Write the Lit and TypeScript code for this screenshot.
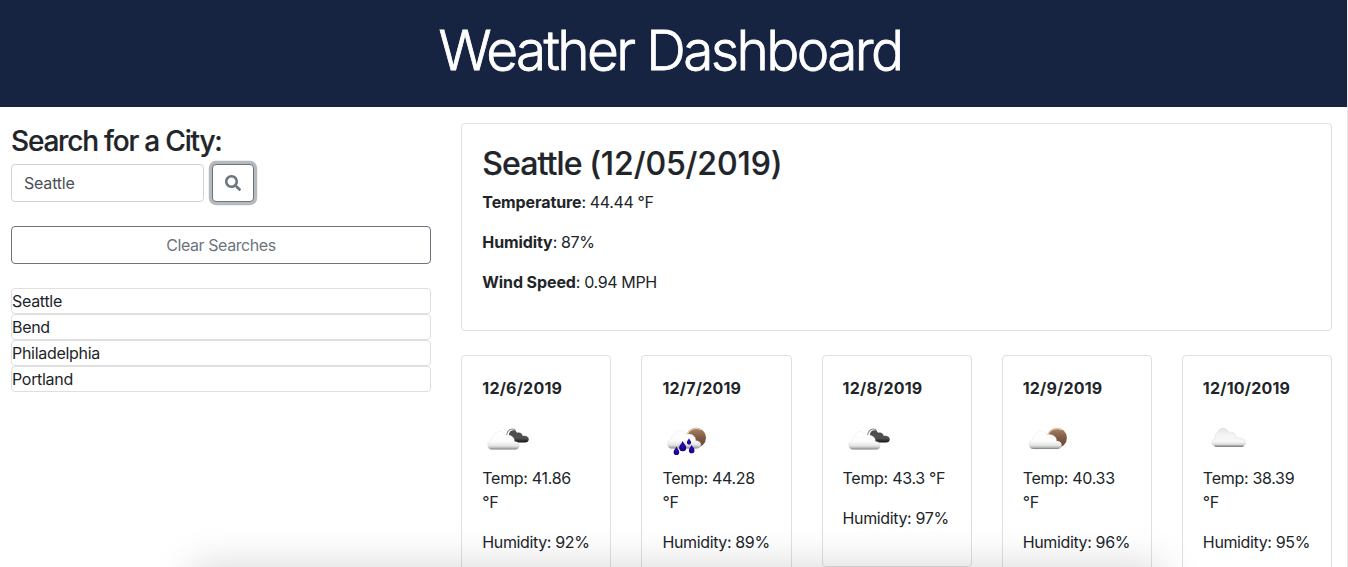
import { LitElement, html, svg, css } from "lit";
import { customElement, property } from "lit/decorators.js";

type Sky = "broken" | "rain" | "few" | "clouds";

interface Day {
  date: string;
  sky: Sky;
  temp: string;
  humidity: string;
}

const DAYS: Day[] = [
  { date: "12/6/2019", sky: "broken", temp: "41.86", humidity: "92%" },
  { date: "12/7/2019", sky: "rain", temp: "44.28", humidity: "89%" },
  { date: "12/8/2019", sky: "broken", temp: "43.3", humidity: "97%" },
  { date: "12/9/2019", sky: "few", temp: "40.33", humidity: "96%" },
  { date: "12/10/2019", sky: "clouds", temp: "38.39", humidity: "95%" },
];

const CITIES = ["Seattle", "Bend", "Philadelphia", "Portland"];

const drop = (x: number, y: number, s: number) => svg`
  <path transform="translate(${x} ${y}) scale(${s})" fill="url(#drop)"
    d="M0 -5C.6 -2.6 3.2 -1.2 3.2 1.4A3.2 3.2 0 0 1 -3.2 1.4C-3.2 -1.2 -.6 -2.6 0 -5Z"/>`;

const moon = svg`
  <circle cx="33.3" cy="21.6" r="10" fill="url(#moon)"/>
  <path d="M24.4 18.6A9.3 9.3 0 0 1 38 13.6" fill="none" stroke="#e9c7ad" stroke-width="1.3"/>`;

const whiteCloud = svg`
  <path fill="url(#white)" stroke="#cfcfcf" stroke-opacity=".45" stroke-width=".5"
    d="M9 33.2C6 33.2 4.6 31 4.6 28.6C4.6 26 6 24.5 8.1 24C7.9 21.4 9 19.4 11.2 18.8C12.2 16.4 14.3 15.2 16.6 15.2C19.2 15.2 21.3 16.6 22.1 18.9C25.4 18.1 28.6 18.8 30 21.1C31.4 22.6 31.4 24 31.2 25C34.3 25.2 36.2 26.8 36.2 29.2C36.2 31.6 34.6 33.2 32 33.2Z"/>`;

@customElement("sky-icon")
export class SkyIcon extends LitElement {
  @property() sky: Sky = "clouds";

  static styles = css`
    :host { display: block; width: 50px; height: 50px; }
    svg { display: block; }
  `;

  private scene() {
    switch (this.sky) {
      case "broken":
        return svg`<g transform="translate(1.1 .3)">
          <path d="M23.4 20.4C23.4 15.6 25.6 12.7 29.4 12.7C31 12.7 32 13.4 32.6 14.6" fill="none" stroke="#8d8d8d" stroke-width="1.1"/>
          <path fill="url(#dark)" d="M29 26.3C26 24 25.2 19 26.2 16.6C27 14.4 29.6 13.6 31.6 14.3C32.8 14.7 33.4 15.6 33.8 16.4C36.6 15.4 39.2 17 39.6 19.6C42.8 19 45.7 20.4 45.7 23C45.7 25 44.2 26.3 42 26.3Z"/>
          ${whiteCloud}</g>`;
      case "rain":
        return svg`<g transform="translate(.7 .2)">${moon}<g transform="translate(-.2 -.8) scale(1.06 1)">${whiteCloud}</g>
          ${drop(13.7, 34.8, 0.88)}${drop(20, 30, 1.1)}${drop(26.3, 25.4, 0.66)}${drop(29, 33, 0.88)}</g>`;
      case "few":
        return svg`<g transform="translate(.6 .3)">${moon}<g transform="translate(.7 -.5) scale(1.03 1)">${whiteCloud}</g></g>`;
      default:
        return svg`
          <path fill="url(#grey)" stroke="#bdbdbd" stroke-opacity=".5" stroke-width=".5"
            d="M13 30.5C10.4 30.5 9 28.8 9 26.6C9 24.8 10.2 23.4 12 22.8C11.6 20.4 12.4 17.4 14.6 16.6C15.4 13.8 17.6 12.3 20 12.3C23.2 12.3 25.4 14.4 26.2 17C28.8 15.6 32 16.8 32.7 19.4C33 20.4 33 21.4 32.8 22.2C35.4 21.2 38 21.8 39.4 23.2C41.4 23.2 42.6 24.6 42.6 26.6C42.6 28.8 41.2 30.5 39 30.5Z"/>
          <path d="M11.8 30.2H40.4" stroke="#777" stroke-width="1.2"/>`;
    }
  }

  render() {
    return html`<svg width="50" height="50" viewBox="0 0 50 50" aria-hidden="true">
      <defs>
        <linearGradient id="white" x1="0" y1="0" x2="0" y2="1">
          <stop offset="0" stop-color="#fff"/><stop offset=".55" stop-color="#fcfcfc"/>
          <stop offset=".8" stop-color="#e4e4e4"/><stop offset=".93" stop-color="#b0b0b0"/><stop offset="1" stop-color="#6c6c6c"/>
        </linearGradient>
        <linearGradient id="grey" x1="0" y1="0" x2="0" y2="1">
          <stop offset="0" stop-color="#e4e4e4"/><stop offset=".35" stop-color="#f4f4f4"/>
          <stop offset=".75" stop-color="#f7f7f7"/><stop offset="1" stop-color="#c0c0c0"/>
        </linearGradient>
        <linearGradient id="dark" x1="0" y1="0" x2="0" y2="1">
          <stop offset="0" stop-color="#4c4c4c"/><stop offset=".65" stop-color="#505050"/><stop offset="1" stop-color="#111"/>
        </linearGradient>
        <linearGradient id="moon" x1="0" y1="0" x2="0" y2="1">
          <stop offset="0" stop-color="#a98468"/><stop offset=".5" stop-color="#7d5a42"/><stop offset="1" stop-color="#6a4731"/>
        </linearGradient>
        <radialGradient id="drop"><stop offset="0" stop-color="#2a10b8"/><stop offset="1" stop-color="#140082"/></radialGradient>
      </defs>
      ${this.scene()}
    </svg>`;
  }
}

@customElement("app-root")
export class AppRoot extends LitElement {
  static styles = css`
    :host {
      display: block;
      position: relative;
      box-sizing: border-box;
      height: 567px;
      overflow: hidden;
      border-right: 1px solid #e8e8e8;
      background: #fff;
      color: #212529;
      font: 400 16px/24px Inter, "Liberation Sans", sans-serif;
      letter-spacing: -0.37px;
    }
    * { box-sizing: border-box; }
    h1, h2, h3, p, ul { margin: 0; padding: 0; }
    .banner {
      height: 107px;
      padding: 17px 7px 0 0;
      background: #172441;
      color: #fff;
      text-align: center;
    }
    .banner h1 {
      font-size: 55px;
      line-height: 67px;
      font-weight: 300;
      letter-spacing: -2.65px;
      -webkit-text-stroke: 0.8px #fff;
    }
    .layout {
      display: grid;
      grid-template-columns: 420px 1fr;
      gap: 30.33px;
      padding: 16px 15px 0 11px;
    }
    .side h3 {
      font-size: 28px;
      line-height: 34px;
      font-weight: 500;
      padding-top: 1px;
      margin-bottom: 6px;
      letter-spacing: -1.2px;
      -webkit-text-stroke: 0.2px #212529;
    }
    .search { display: flex; gap: 8px; margin-bottom: 24px; }
    .field {
      width: 193px;
      height: 38px;
      padding: 6px 12px;
      border: 1px solid #ced4da;
      border-radius: 4px;
      background: #fff;
      color: #495057;
      font: inherit;
      letter-spacing: -0.2px;
      outline: none;
    }
    .btn {
      display: flex;
      align-items: center;
      justify-content: center;
      height: 38px;
      padding: 0;
      border: 1px solid #6c757d;
      border-radius: 4px;
      background: #fff;
      color: #6c757d;
      font: inherit;
      letter-spacing: -0.42px;
    }
    .go { width: 42px; box-shadow: 0 0 0 3.2px rgba(108, 117, 125, 0.5); }
    .clear { width: 100%; margin-bottom: 24px; }
    .cities { list-style: none; letter-spacing: -0.3px; }
    .cities li { height: 26px; border: 1px solid #dfdfdf; border-radius: 4px; }
    .card { border: 1px solid #dfdfdf; border-radius: 4px; padding: 20px; }
    .card p { margin-bottom: 16px; }
    .today { height: 208px; margin-bottom: 24px; }
    .today h2 {
      font-size: 32px;
      line-height: 38.4px;
      font-weight: 500;
      padding-top: 1px;
      margin-bottom: 7px;
      letter-spacing: -0.93px;
      -webkit-text-stroke: 0.2px #212529;
    }
    .when { letter-spacing: -0.1px; }
    .label { font-weight: 700; letter-spacing: -0.1px; }
    .date { font-weight: 700; letter-spacing: 0.2px; }
    .temp { letter-spacing: -0.3px; }
    .days { display: grid; grid-template-columns: repeat(5, 1fr); gap: 30px; align-items: start; }
    .shade {
      position: absolute;
      left: 192px;
      right: 184px;
      top: 567px;
      height: 200px;
      border-radius: 8px;
      box-shadow: 0 0 42px rgba(0, 0, 0, 0.17);
      pointer-events: none;
    }
  `;

  render() {
    return html`
      <header class="banner"><h1>Weather Dashboard</h1></header>
      <main class="layout">
        <aside class="side">
          <h3>Search for a City:</h3>
          <div class="search">
            <input class="field" type="text" aria-label="City" .value=${"Seattle"} />
            <button class="btn go" aria-label="Search">
              <svg width="16" height="16" viewBox="0 0 512 512" fill="currentColor">
                <path d="M505 442.7L405.3 343c-4.5-4.5-10.6-7-17-7H372c27.600-35.300 44-79.700 44-128C416 93.100 322.900 0 208 0S0 93.100 0 208s93.100 208 208 208c48.300 0 92.700-16.400 128-44v16.300c0 6.400 2.500 12.500 7 17l99.700 99.700c9.400 9.400 24.600 9.400 33.900 0l28.300-28.300c9.400-9.400 9.400-24.600.1-34zM208 336c-70.700 0-128-57.200-128-128 0-70.700 57.200-128 128-128 70.700 0 128 57.200 128 128 0 70.700-57.200 128-128 128z"/>
              </svg>
            </button>
          </div>
          <button class="btn clear">Clear Searches</button>
          <ul class="cities">${CITIES.map((c) => html`<li>${c}</li>`)}</ul>
        </aside>
        <section>
          <div class="card today">
            <h2>Seattle <span class="when">(12/05/2019)</span></h2>
            <p><b class="label">Temperature</b>: 44.44 °F</p>
            <p><b class="label">Humidity</b>: 87%</p>
            <p><b class="label">Wind Speed</b>: 0.94 MPH</p>
          </div>
          <div class="days">
            ${DAYS.map((d) => html`
              <article class="card">
                <p class="date">${d.date}</p>
                <sky-icon .sky=${d.sky}></sky-icon>
                <p class="temp">Temp: ${d.temp} °F</p>
                <p>Humidity: ${d.humidity}</p>
              </article>`)}
          </div>
        </section>
      </main>
      <div class="shade"></div>
    `;
  }
}
